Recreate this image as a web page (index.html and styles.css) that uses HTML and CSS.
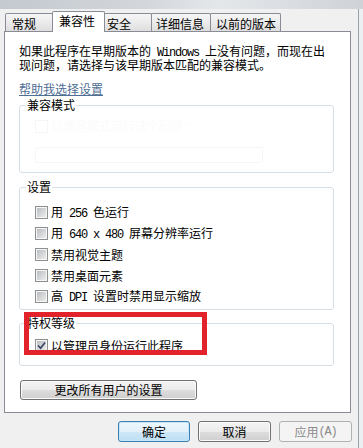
FILE: index.html
```html
<!DOCTYPE html>
<html>
<head>
<meta charset="utf-8">
<link rel="stylesheet" href="styles.css">
</head>
<body>
<div class="top"></div>
<div class="win">
  <div class="tabs">
    <div class="tab t1">常规</div>
    <div class="tab sel t2">兼容性</div>
    <div class="tab t3">安全</div>
    <div class="tab t4">详细信息</div>
    <div class="tab t5">以前的版本</div>
  </div>
  <div class="panel">
    <p class="intro">如果此程序在早期版本的<span class="m"> Windows </span>上没有问题，而现在出<br>现问题，请选择与该早期版本匹配的兼容模式。</p>
    <a class="help">帮助我选择设置</a>
    <fieldset class="grp g1">
      <legend>兼容模式</legend>
      <div class="gbody b1">
        <div class="frow"><span class="fcb"></span><span class="ftext">以兼容模式运行这个程序：</span></div>
        <div class="combo"></div>
      </div>
    </fieldset>
    <fieldset class="grp g2">
      <legend>设置</legend>
      <div class="gbody b2">
        <div class="row"><span class="cb"></span><span>用<span class="m"> 256 </span>色运行</span></div>
        <div class="row"><span class="cb"></span><span>用<span class="m"> 640 x 480 </span>屏幕分辨率运行</span></div>
        <div class="row"><span class="cb"></span><span>禁用视觉主题</span></div>
        <div class="row"><span class="cb"></span><span>禁用桌面元素</span></div>
        <div class="row"><span class="cb"></span><span>高<span class="m"> DPI </span>设置时禁用显示缩放</span></div>
      </div>
    </fieldset>
    <fieldset class="grp g3">
      <legend>特权等级</legend>
      <div class="gbody b3">
        <div class="row"><span class="cb checked"><svg width="9" height="9" viewBox="0 0 9 9"><path d="M1 4.5 L3.6 7.2 L8 1.5" fill="none" stroke="#3d4a66" stroke-width="1.8"/></svg></span><span>以管理员身份运行此程序</span></div>
      </div>
    </fieldset>
    <div class="btn wide">更改所有用户的设置</div>
  </div>
  <div class="actions">
    <div class="btn def">确定</div>
    <div class="btn">取消</div>
    <div class="btn dis">应用<span class="m">(A)</span></div>
  </div>
</div>
<div class="mark"></div>
</body>
</html>
```

FILE: styles.css
```css
* { box-sizing: border-box; }
body {
  margin: 0;
  width: 363px;
  height: 448px;
  overflow: hidden;
  background: #eceff2;
  font-family: "Noto Sans CJK SC", "Noto Sans", sans-serif;
  font-size: 12px;
  line-height: 12px;
  color: #000;
}
.m {
  font-family: "Liberation Mono", monospace;
  font-size: 12px;
  letter-spacing: -1.2px;
  line-height: 10px;
}
.top {
  height: 9px;
  background: linear-gradient(90deg, #c4c9cf 0%, #d3d7dc 40%, #e4e7ea 60%, #cfd3d8 100%);
}
.win {
  width: 359px;
  height: 439px;
  background: #f0f0f0;
  border-right: 1px solid #9ca1a6;
  padding-top: 2px;
}
.tabs {
  display: flex;
  align-items: flex-end;
  height: 21px;
  margin: 0 0 -1px 5px;
  position: relative;
  z-index: 1;
}
.tab {
  height: 18px;
  margin-bottom: 1px;
  border: 1px solid #898c95;
  border-bottom: none;
  border-radius: 2px 2px 0 0;
  background: linear-gradient(#f6f6f6, #ebebeb 50%, #dedede);
  padding: 4px 0 0 6px;
  white-space: nowrap;
}
.tab + .tab { margin-left: -1px; }
.t1 { width: 48px; }
.t2 { width: 53px; }
.t3 { width: 48px; padding-left: 2px; }
.t4 { width: 60px; padding-left: 4px; }
.t5 { width: 71px; padding-left: 5px; }
.sel {
  height: 21px;
  margin-bottom: 0;
  background: #fff;
  padding-top: 3px;
  position: relative;
  z-index: 2;
}
.panel {
  margin-left: 4px;
  width: 347px;
  height: 382px;
  background: #fff;
  border: 1px solid #898c95;
  padding: 0 0 0 14px;
}
.intro { margin: 12px 0 0; line-height: 13px; }
.help {
  display: block;
  width: max-content;
  margin-top: 12px;
  color: #4f6e93;
  text-decoration: underline;
}
.grp {
  margin: 0;
  padding: 0;
  width: 315px;
  min-width: 0;
  border: 1px solid #d5dfe5;
  border-radius: 3px;
}
.grp legend {
  margin-left: 6px;
  padding: 0 1px;
  line-height: 12px;
}
.g1 { margin-top: 4px; }
.g2 { margin-top: 8px; }
.g3 { margin-top: 7px; }
.gbody { padding-left: 15px; }
.b1 { height: 61px; padding-top: 8px; }
.b2 { padding-top: 9px; padding-bottom: 2px; }
.b3 { padding-top: 6px; padding-bottom: 9px; }
.frow {
  display: flex;
  align-items: center;
  height: 14px;
  color: #fbfbfb;
}
.fcb {
  width: 13px;
  height: 13px;
  border: 1px solid #f6f6f6;
  margin-right: 3px;
}
.combo {
  margin-top: 14px;
  width: 228px;
  height: 16px;
  border: 1px solid #f6f6f6;
  border-radius: 2px;
}
.row {
  display: flex;
  align-items: center;
  height: 21px;
  white-space: nowrap;
}
.cb {
  flex: none;
  width: 13px;
  height: 13px;
  margin-right: 3px;
  border: 1px solid #8e8f8f;
  padding: 1px;
  background: linear-gradient(135deg, #b9bdc2, #ececec) content-box, #f6f6f6;
  display: flex;
  align-items: center;
  justify-content: center;
}
.cb.checked svg { display: block; }
.btn {
  height: 21px;
  border: 1px solid #707070;
  border-radius: 3px;
  background: linear-gradient(#f3f3f3, #ebebeb 50%, #dddddd 50%, #cfcfcf);
  box-shadow: inset 0 0 0 1px #fbfbfb;
  display: flex;
  align-items: center;
  justify-content: center;
  white-space: nowrap;
}
.wide {
  width: 177px;
  height: 20px;
  margin: 14px 0 0 1px;
}
.actions {
  display: flex;
  justify-content: flex-end;
  gap: 8px;
  margin-top: 8px;
  padding-right: 6px;
}
.actions .btn { width: 73px; }
.actions .def {
  width: 72px;
  border-color: #3c7fb1;
  background: linear-gradient(#eef7fd, #e2f1fb 50%, #cfe8f8 50%, #bcdff4);
  box-shadow: inset 0 0 0 1px #c5e6fb;
}
.actions .dis {
  border-color: #adb2b5;
  background: #f4f4f4;
  box-shadow: none;
  color: #8b8b8b;
}
.mark {
  position: absolute;
  left: 24px;
  top: 312px;
  width: 183px;
  height: 43px;
  border: 5px solid #e3232b;
}
```
